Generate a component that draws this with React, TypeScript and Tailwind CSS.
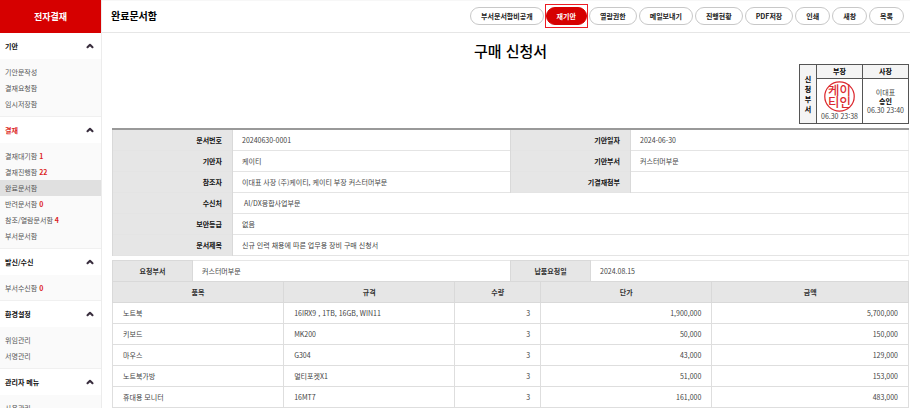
import { ChevronUp } from "lucide-react";
import clsx from "clsx";

interface MenuItem {
    label: string;
    count?: number;
}

interface MenuSection {
    title: string;
    current?: boolean;
    items: MenuItem[];
}

interface OrderItem {
    name: string;
    spec: string;
    quantity: number;
    price: number;
}

const SECTIONS: MenuSection[] = [
    { title: "기안", items: [{ label: "기안문작성" }, { label: "결재요청함" }, { label: "임시저장함" }] },
    {
        title: "결재",
        current: true,
        items: [
            { label: "결재대기함", count: 1 },
            { label: "결재진행함", count: 22 },
            { label: "완료문서함" },
            { label: "반려문서함", count: 0 },
            { label: "참조/열람문서함", count: 4 },
            { label: "부서문서함" },
        ],
    },
    { title: "발신/수신", items: [{ label: "부서수신함", count: 0 }] },
    { title: "환경설정", items: [{ label: "위임관리" }, { label: "서명관리" }] },
    { title: "관리자 메뉴", items: [{ label: "사용관리" }] },
];

const ACTIONS = ["부서문서함비공개", "재기안", "열람권한", "메일보내기", "진행현황", "PDF저장", "인쇄", "새창", "목록"];

const ORDER_ITEMS: OrderItem[] = [
    { name: "노트북", spec: "16IRX9 , 1TB, 16GB, WIN11", quantity: 3, price: 1900000 },
    { name: "키보드", spec: "MK200", quantity: 3, price: 50000 },
    { name: "마우스", spec: "G304", quantity: 3, price: 43000 },
    { name: "노트북가방", spec: "멀티포켓X1", quantity: 3, price: 51000 },
    { name: "휴대용 모니터", spec: "16MT7", quantity: 3, price: 161000 },
];

const ACTIVE_ITEM = "완료문서함";
const PRIMARY_ACTION = "재기안";

function Sidebar() {
    return (
        <aside className="w-[102px] shrink-0 overflow-hidden border-r border-[#ececec]">
            <h1 className="flex h-[33px] items-center justify-center bg-[#d60000] text-[9px] font-bold text-white">
                전자결재
            </h1>
            <nav>
                {SECTIONS.map((section) => (
                    <section key={section.title}>
                        <button
                            type="button"
                            className={clsx(
                                "flex h-[26px] w-full items-center justify-between pr-[6px] pl-[5px] font-bold",
                                section.current ? "text-[#dc1f26]" : "text-[#111]"
                            )}
                        >
                            {section.title}
                            <ChevronUp size={10} strokeWidth={5} className="text-[#3a2f3f]" />
                        </button>
                        <ul className="border-b border-[#f0f0f0] bg-[#fafafa] pt-[5px] pb-1">
                            {section.items.map((item) => (
                                <li key={item.label}>
                                    <a
                                        href="#"
                                        className={clsx(
                                            "flex h-4 items-center gap-[2px] pl-[5px] text-[#555]",
                                            item.label === ACTIVE_ITEM && "bg-[#e0e0e0]"
                                        )}
                                    >
                                        {item.label}
                                        {item.count !== undefined && (
                                            <b className="font-bold text-[#dc1f26]">{item.count}</b>
                                        )}
                                    </a>
                                </li>
                            ))}
                        </ul>
                    </section>
                ))}
            </nav>
        </aside>
    );
}

function Toolbar() {
    return (
        <header className="flex h-[33px] items-center justify-between border-t border-b border-t-[#f7f7f7] border-b-[#e6e6e6] pr-[6px] pb-px pl-[9px]">
            <h2 className="text-[10px] font-bold text-black">완료문서함</h2>
            <div className="flex gap-[2px]">
                {ACTIONS.map((action) => (
                    <div key={action} className="relative">
                        <button
                            type="button"
                            className={clsx(
                                "block h-[18px] rounded-full border px-[10px] font-bold whitespace-nowrap",
                                action === PRIMARY_ACTION
                                    ? "border-[#d60000] bg-[#d60000] text-white"
                                    : "border-[#c8c8c8] bg-white text-[#222]"
                            )}
                        >
                            {action}
                        </button>
                        {action === PRIMARY_ACTION && (
                            <span className="pointer-events-none absolute -inset-x-px -inset-y-[3px] border border-[#ed1c24]" />
                        )}
                    </div>
                ))}
            </div>
        </header>
    );
}

function Stamp() {
    return (
        <svg viewBox="0 0 60 60" className="mx-auto block size-[31px] overflow-visible text-[#dc2a30]">
            <circle cx="30" cy="30" r="28.5" fill="none" stroke="currentColor" strokeWidth="2.4" />
            <text fill="currentColor" fontSize="24" fontWeight="500" textAnchor="middle">
                <tspan x="30" y="27">케이</tspan>
                <tspan x="30" y="51">티인</tspan>
            </text>
        </svg>
    );
}

function ApprovalLine() {
    return (
        <table className="ml-auto border-collapse text-center leading-[9px] text-[#444] [&_td]:border [&_td]:border-[#555] [&_th]:border [&_th]:border-[#555] [&_th]:bg-[#f4f4f4] [&_th]:font-bold [&_th]:text-black">
            <tbody>
                <tr className="h-[14px]">
                    <th rowSpan={2} scope="rowgroup" className="w-[17px] leading-[10px]">
                        신<br />청<br />부<br />서
                    </th>
                    <th scope="col" className="w-[46px]">부장</th>
                    <th scope="col" className="w-[46px]">사장</th>
                </tr>
                <tr className="h-[45px]">
                    <td className="whitespace-nowrap">
                        <Stamp />
                        06.30 23:38
                    </td>
                    <td className="whitespace-nowrap">
                        이대표
                        <br />
                        <b className="font-bold text-black">승인</b>
                        <br />
                        06.30 23:40
                    </td>
                </tr>
            </tbody>
        </table>
    );
}

function DocumentInfo() {
    return (
        <table className="mt-1 w-full table-fixed border-collapse border-t-2 border-r border-t-[#999] border-r-[#eee] [&_td]:pr-[10px] [&_td]:pl-[9px] [&_th]:border-x [&_th]:border-[#d9d9d9] [&_th]:bg-[#e6e6e6] [&_th]:px-[10px] [&_th]:text-right [&_th]:font-bold [&_th]:text-[#111] [&_tr]:h-[21px] [&_tr]:border-b [&_tr]:border-[#e4e4e4]">
            <colgroup>
                <col className="w-[120px]" />
                <col />
                <col className="w-[120px]" />
                <col />
            </colgroup>
            <tbody>
                <tr>
                    <th scope="row">문서번호</th>
                    <td>20240630-0001</td>
                    <th scope="row">기안일자</th>
                    <td>2024-06-30</td>
                </tr>
                <tr>
                    <th scope="row">기안자</th>
                    <td>케이티</td>
                    <th scope="row">기안부서</th>
                    <td>커스터머부문</td>
                </tr>
                <tr>
                    <th scope="row">참조자</th>
                    <td>이대표 사장 (주)케이티, 케이티 부장 커스터머부문</td>
                    <th scope="row">기결재첨부</th>
                    <td></td>
                </tr>
                <tr>
                    <th scope="row">수신처</th>
                    <td colSpan={3}>&nbsp;AI/DX융합사업부문</td>
                </tr>
                <tr>
                    <th scope="row">보안등급</th>
                    <td colSpan={3}>없음</td>
                </tr>
                <tr>
                    <th scope="row">문서제목</th>
                    <td colSpan={3}>신규 인력 채용에 따른 업무용 장비 구매 신청서</td>
                </tr>
            </tbody>
        </table>
    );
}

function OrderTable() {
    return (
        <div className="mt-1">
            <table className="w-full table-fixed border-collapse border border-[#e6e6e6] [&_td]:pr-[10px] [&_td]:pl-[9px] [&_th]:border [&_th]:border-[#d9d9d9] [&_th]:bg-[#e6e6e6] [&_th]:font-bold [&_th]:text-[#333]">
                <colgroup>
                    <col className="w-[80px]" />
                    <col />
                    <col className="w-[80px]" />
                    <col />
                </colgroup>
                <tbody>
                    <tr className="h-[21px]">
                        <th scope="row">요청부서</th>
                        <td>커스터머부문</td>
                        <th scope="row">납품요청일</th>
                        <td>2024.08.15</td>
                    </tr>
                </tbody>
            </table>
            <table className="-mt-px w-full table-fixed border-collapse [&_td]:border [&_td]:border-[#dedede] [&_td]:px-[10px] [&_th]:border [&_th]:border-[#d9d9d9] [&_th]:bg-[#e6e6e6] [&_th]:font-bold [&_th]:text-[#333] [&_tr]:h-[21px]">
                <colgroup>
                    <col className="w-[21.5%]" />
                    <col className="w-[21.5%]" />
                    <col className="w-[10.8%]" />
                    <col className="w-[21.5%]" />
                    <col />
                </colgroup>
                <thead>
                    <tr>
                        <th scope="col">품목</th>
                        <th scope="col">규격</th>
                        <th scope="col">수량</th>
                        <th scope="col">단가</th>
                        <th scope="col">금액</th>
                    </tr>
                </thead>
                <tbody>
                    {ORDER_ITEMS.map((item) => (
                        <tr key={item.name}>
                            <td>{item.name}</td>
                            <td>{item.spec}</td>
                            <td className="text-right">{item.quantity}</td>
                            <td className="text-right">{item.price.toLocaleString("en-US")}</td>
                            <td className="text-right">{(item.price * item.quantity).toLocaleString("en-US")}</td>
                        </tr>
                    ))}
                </tbody>
            </table>
        </div>
    );
}

function App() {
    return (
        <div lang="ko" className="flex h-screen overflow-hidden bg-white font-['Noto_Sans_CJK_KR',sans-serif] text-[7px] leading-[16px] text-[#444]">
            <Sidebar />
            <main className="min-w-0 flex-1 overflow-hidden">
                <Toolbar />
                <article className="pr-px pl-[10px]">
                    <h3 className="pt-2 pb-[3px] text-center text-[15px] leading-[20px] font-medium text-black">
                        구매 신청서
                    </h3>
                    <ApprovalLine />
                    <DocumentInfo />
                    <OrderTable />
                </article>
            </main>
        </div>
    );
}

export default App;
